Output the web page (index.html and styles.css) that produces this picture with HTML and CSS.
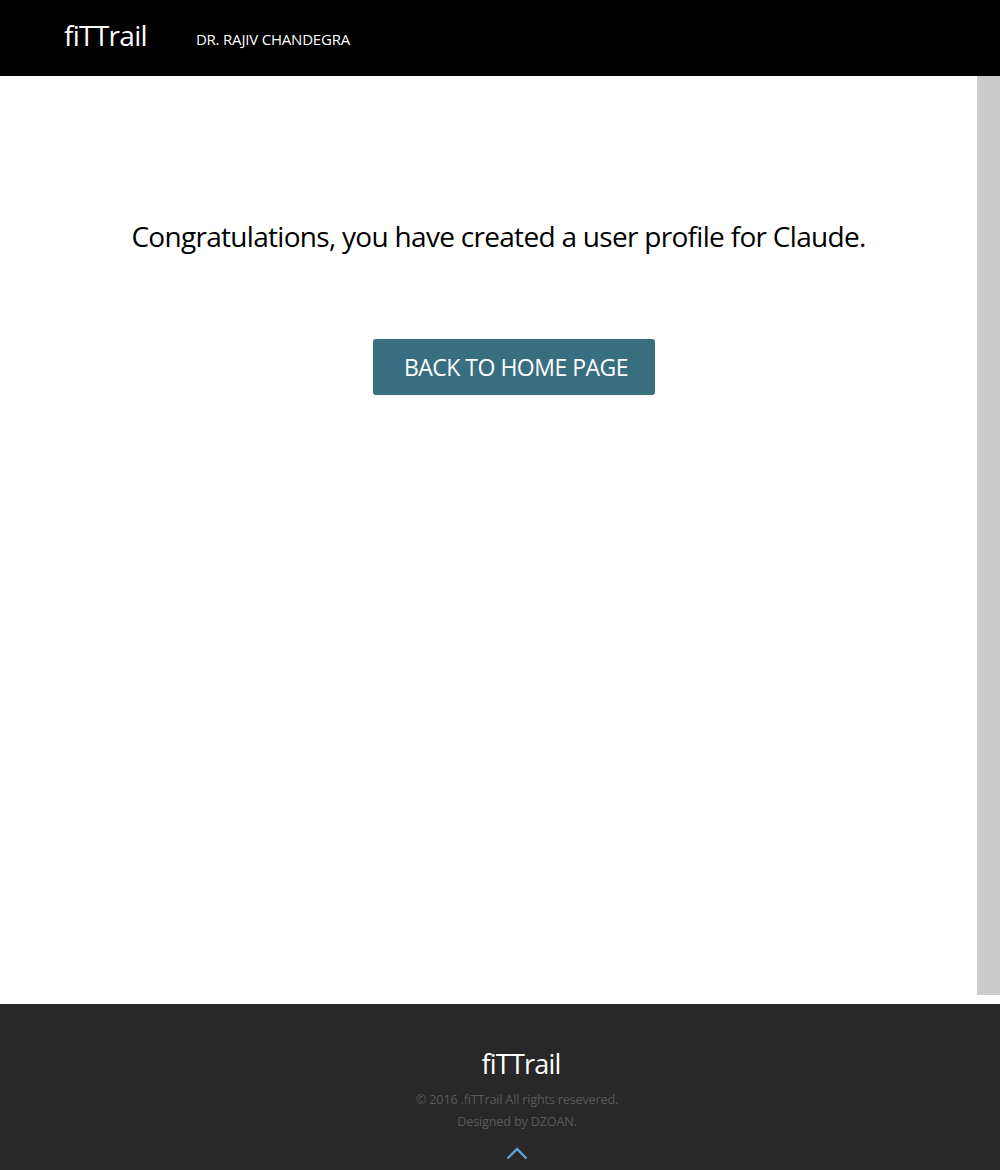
FILE: index.html
```html
<!DOCTYPE html>
<html lang="en">
<head>
<meta charset="utf-8">
<title>fiTTrail</title>
<link rel="stylesheet" href="styles.css">
</head>
<body>
<header class="topbar">
  <a class="logo" href="#">fiTTrail</a>
  <span class="doctor">DR. RAJIV CHANDEGRA</span>
</header>
<div class="page">
  <main class="content">
    <h1 class="message">Congratulations, you have created a user profile for Claude.</h1>
    <a class="home-btn" href="#">BACK TO HOME PAGE</a>
  </main>
  <aside class="sidebar"></aside>
</div>
<footer class="footer">
  <div class="footer-logo">fiTTrail</div>
  <p class="footer-line">© 2016 .fiTTrail All rights resevered.</p>
  <p class="footer-line">Designed by DZOAN.</p>
  <a class="to-top" href="#" aria-label="Back to top">
    <svg width="22" height="13" viewBox="0 0 22 13"><path d="M1.5 11.5 L11 2 L20.5 11.5" fill="none" stroke="#5da3cf" stroke-width="2.4"/></svg>
  </a>
</footer>
</body>
</html>
```
FILE: styles.css
```css
* { box-sizing: border-box; }
html, body { margin: 0; padding: 0; }
body {
  width: 1000px;
  font-family: "Open Sans", "Noto Sans", sans-serif;
  background: #fff;
  color: #000;
}
.topbar {
  height: 76px;
  background: #000;
  display: flex;
  align-items: center;
  padding-left: 64px;
}
.logo {
  color: #fff;
  text-decoration: none;
  font-size: 28px;
  letter-spacing: -0.7px;
  margin-top: -6px;
}
.doctor {
  color: #fff;
  font-size: 15px;
  letter-spacing: -0.2px;
  margin-left: 49px;
  margin-top: 2px;
}
.page {
  display: flex;
  height: 919px;
}
.content {
  flex: 1;
  display: flex;
  flex-direction: column;
  align-items: center;
}
.sidebar {
  width: 23px;
  background: #cccccc;
}
.message {
  margin: 138px 0 0 20px;
  font-size: 28px;
  font-weight: 400;
  letter-spacing: -0.7px;
  line-height: 44px;
}
.home-btn {
  margin: 81px 0 0 51px;
  width: 282px;
  height: 56px;
  background: #376f80;
  border-radius: 3px;
  color: #fff;
  text-decoration: none;
  font-size: 23px;
  letter-spacing: -0.5px;
  display: flex;
  align-items: center;
  justify-content: center;
  padding-left: 4px;
}
.footer {
  margin-top: 9px;
  height: 166px;
  background: #282828;
  display: flex;
  flex-direction: column;
  align-items: center;
  padding-top: 40px;
  padding-left: 34px;
}
.footer-logo {
  color: #fff;
  font-size: 27px;
  letter-spacing: -0.8px;
  line-height: 40px;
  margin-left: 8px;
}
.footer-line {
  margin: 0;
  color: #5a5a5a;
  font-size: 12.7px;
  letter-spacing: -0.2px;
  line-height: 22px;
}
.footer-line:first-of-type { margin-top: 4px; }
.to-top {
  margin-top: 15px;
  display: block;
  line-height: 0;
}
```
